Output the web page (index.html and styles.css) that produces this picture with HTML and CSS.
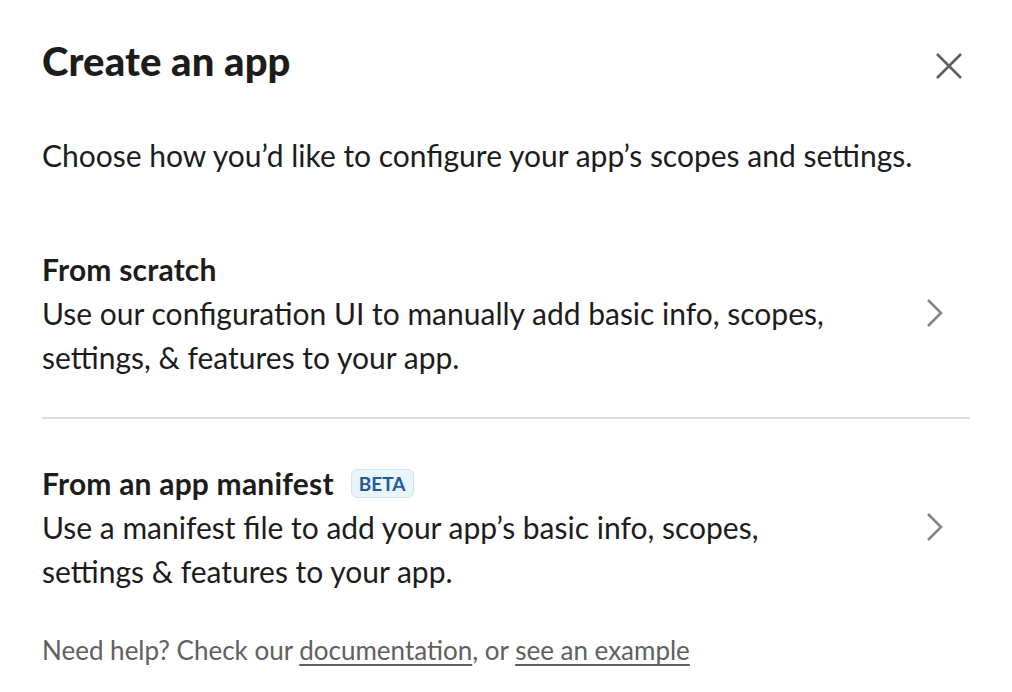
FILE: index.html
```html
<!DOCTYPE html>
<html>
<head>
<meta charset="utf-8">
<link rel="stylesheet" href="styles.css">
</head>
<body>
<div class="modal">
  <div class="header">
    <h1 class="title">Create an app</h1>
    <button class="close" aria-label="Close">
      <svg width="26" height="26" viewBox="0 0 26 26"><path d="M1 1 L25 25 M25 1 L1 25" stroke="#5e5e5e" stroke-width="2.6" fill="none"/></svg>
    </button>
  </div>
  <p class="intro">Choose how you’d like to configure your app’s scopes and settings.</p>
  <div class="option option-first">
    <div class="option-text">
      <div class="option-title">From scratch</div>
      <div class="option-desc">Use our configuration UI to manually add basic info, scopes,<br>settings, &amp; features to your app.</div>
    </div>
    <svg class="chev" width="18" height="30" viewBox="0 0 18 30"><path d="M2 2 L15 15 L2 28" stroke="#858585" stroke-width="2.6" fill="none"/></svg>
  </div>
  <div class="divider"></div>
  <div class="option option-second">
    <div class="option-text">
      <div class="option-title">From an app manifest <span class="badge">BETA</span></div>
      <div class="option-desc">Use a manifest file to add your app’s basic info, scopes,<br>settings &amp; features to your app.</div>
    </div>
    <svg class="chev" width="18" height="30" viewBox="0 0 18 30"><path d="M2 2 L15 15 L2 28" stroke="#858585" stroke-width="2.6" fill="none"/></svg>
  </div>
  <p class="help">Need help? Check our <a href="#">documentation</a>, or <a href="#">see an example</a></p>
</div>
</body>
</html>
```
FILE: styles.css
```css
html, body {
  margin: 0;
  padding: 0;
  background: #fff;
}
body {
  font-family: Lato, "Noto Sans", sans-serif;
  color: #1d1c1d;
}
.modal {
  padding: 32px 42px 0 42px;
}
.header {
  display: flex;
  justify-content: space-between;
  align-items: flex-start;
}
.title {
  margin: 0;
  font-size: 40px;
  font-weight: 900;
  letter-spacing: 0.1px;
  line-height: 58px;
}
.close {
  background: none;
  border: 0;
  padding: 0;
  margin: 21px 8px 0 0;
  display: flex;
}
.intro {
  margin: 43px 0 27px 0;
  font-size: 30px;
  line-height: 44px;
}
.option {
  display: flex;
  align-items: center;
  justify-content: space-between;
  padding: 43px 26px 38px 0;
}
.option-second {
  padding-top: 42px;
}
.option-title {
  font-size: 30px;
  font-weight: 700;
  letter-spacing: 0.2px;
  line-height: 44px;
  display: flex;
  align-items: center;
}
.option-desc {
  font-size: 30px;
  line-height: 44px;
}
.badge {
  display: inline-block;
  margin-left: 17px;
  font-size: 19px;
  font-weight: 700;
  letter-spacing: 0;
  color: #1f5b9b;
  background: #e8f5fa;
  border: 1px solid #cfe4f2;
  border-radius: 6px;
  padding: 0 7px;
  line-height: 27px;
}
.divider {
  height: 2px;
  background: #dddddd;
}
.help {
  margin: 1px 0 0 0;
  font-size: 26px;
  line-height: 36px;
  color: #616061;
}
.help a {
  color: #616061;
  text-decoration: underline;
  text-underline-offset: 4px;
}
```
